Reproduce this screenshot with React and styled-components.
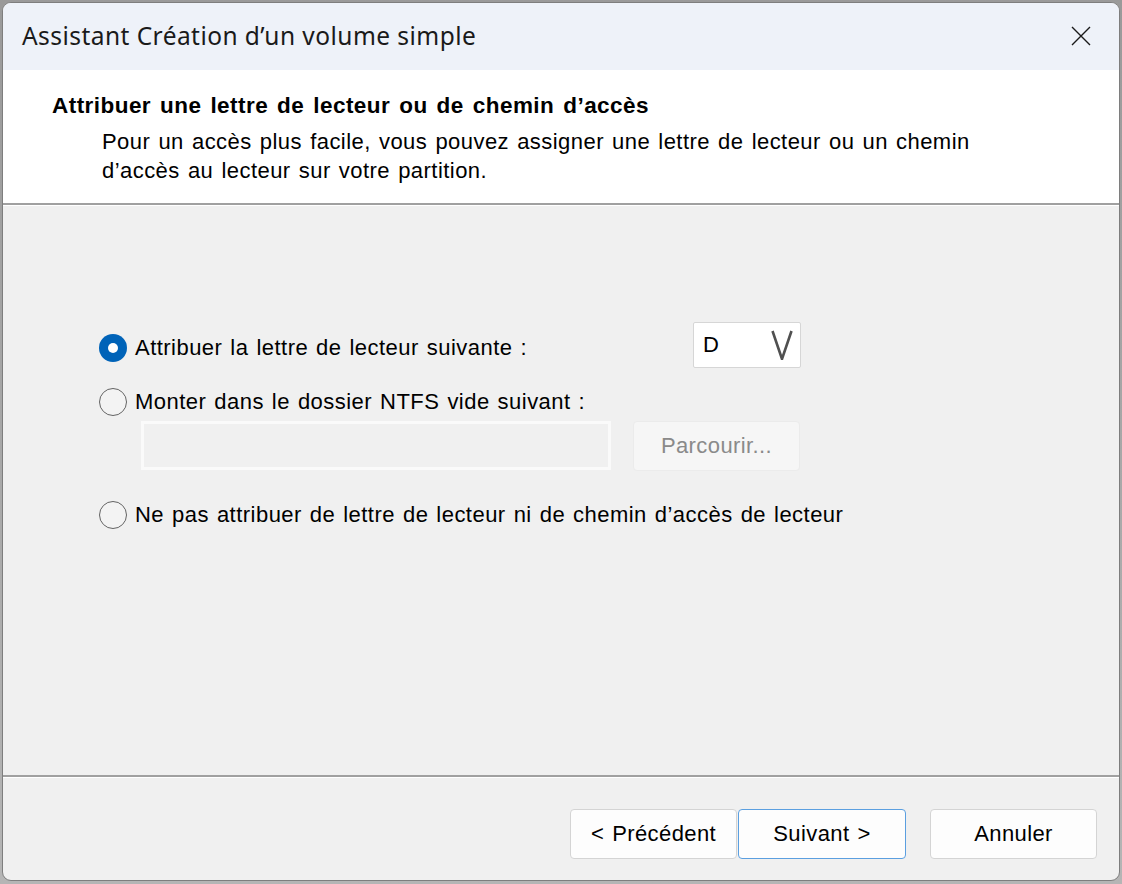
import React from "react";
import styled, { createGlobalStyle } from "styled-components";

const Global = createGlobalStyle`
  html, body { margin: 0; padding: 0; }
  body { background: #8c8c8c; width: 1122px; height: 884px; overflow: hidden; }
  * { box-sizing: border-box; }
`;

const Screen = styled.div`
  width: 1122px;
  height: 884px;
  padding: 2px 2px 3px 2px;
  background: linear-gradient(#9a9a9a, #b5b5b5);
`;

const Window = styled.div`
  width: 1118px;
  height: 879px;
  border: 1px solid #7e7e7e;
  border-radius: 9px;
  overflow: hidden;
  display: flex;
  flex-direction: column;
  background: #f0f0f0;
  font-family: "Liberation Sans", Arial, sans-serif;
  color: #000;
`;

const TitleBar = styled.div`
  height: 67px;
  flex: none;
  background: #eef2f9;
  display: flex;
  align-items: center;
  justify-content: space-between;
  padding: 0 28px 2px 19px;
`;

const Title = styled.div`
  font-family: "Noto Sans", "Open Sans", sans-serif;
  font-size: 24.5px;
  letter-spacing: 0.45px;
  color: #1a1a1a;
`;

const CloseIcon = styled.svg`
  width: 20px;
  height: 20px;
  display: block;
`;

const Header = styled.div`
  flex: none;
  height: 135px;
  background: #fff;
  border-bottom: 2px solid #a0a0a0;
  padding: 23px 0 0 49px;
`;

const Heading = styled.div`
  font-weight: bold;
  font-size: 22.5px;
  letter-spacing: 0.45px;
  word-spacing: 2.3px;
  line-height: 26px;
`;

const Subtitle = styled.div`
  margin: 8px 0 0 50px;
  font-size: 22px;
  letter-spacing: 0.45px;
  word-spacing: 1.6px;
  line-height: 29px;
  width: 960px;
`;

const Body = styled.div`
  flex: 1;
  border-top: 1px solid #fff;
  border-bottom: 2px solid #a0a0a0;
  padding: 116px 0 0 96px;
  display: flex;
  flex-direction: column;
`;

const OptionRow = styled.div`
  display: flex;
  align-items: center;
  height: ${(p) => p.$h || 28}px;
  margin-top: ${(p) => p.$mt || 0}px;
`;

const Label = styled.div`
  display: flex;
  align-items: center;
  gap: 8px;
  font-size: 22px;
  letter-spacing: 0.47px;
  word-spacing: 1.4px;
  width: ${(p) => (p.$w ? p.$w + "px" : "auto")};
  padding-top: ${(p) => p.$shift || 0}px;
  white-space: nowrap;
`;

const Radio = styled.span`
  width: 28px;
  height: 28px;
  border-radius: 50%;
  flex: none;
  position: relative;
  background: ${(p) => (p.$checked ? "#0063b8" : "#f3f3f3")};
  border: ${(p) => (p.$checked ? "none" : "1.5px solid #636363")};
  &::after {
    content: "";
    display: ${(p) => (p.$checked ? "block" : "none")};
    position: absolute;
    left: 9px;
    top: 9px;
    width: 10px;
    height: 10px;
    border-radius: 50%;
    background: #fff;
  }
`;

const Select = styled.div`
  width: 108px;
  height: 46px;
  background: #fff;
  border: 1px solid #d6d6d6;
  border-radius: 2px;
  display: flex;
  align-items: center;
  justify-content: space-between;
  padding: 0 7px 0 9px;
  font-size: 22px;
`;

const Chevron = styled.svg`
  width: 22px;
  height: 30px;
  display: block;
`;

const FieldRow = styled.div`
  display: flex;
  gap: 22px;
  margin: 5px 0 0 42px;
`;

const TextField = styled.div`
  width: 470px;
  height: 49px;
  border: 3px solid #fafafa;
  background: #f0f0f0;
`;

const Button = styled.div`
  width: ${(p) => p.$w || 167}px;
  height: 50px;
  border-radius: 4px;
  border: 1px solid ${(p) => (p.$primary ? "#5b9fe0" : p.$disabled ? "#ebebeb" : "#d4d4d4")};
  background: ${(p) => (p.$disabled ? "#f6f6f6" : "#fdfdfd")};
  color: ${(p) => (p.$disabled ? "#8a8a8a" : "#000")};
  display: flex;
  align-items: center;
  justify-content: center;
  font-size: 22px;
  letter-spacing: 0.4px;
  word-spacing: 1.5px;
  padding-bottom: 1px;
`;

const Footer = styled.div`
  flex: none;
  height: 103px;
  border-top: 1px solid #fff;
  display: flex;
  justify-content: flex-end;
  align-items: flex-start;
  padding: 31px 22px 0 0;
`;

const ButtonGroup = styled.div`
  display: flex;
  gap: 1px;
  margin-right: 24px;
`;

export default function App() {
  return (
    <>
      <Global />
      <Screen>
        <Window>
          <TitleBar>
            <Title>Assistant Création d’un volume simple</Title>
            <CloseIcon viewBox="0 0 20 20">
              <path d="M1 1 L19 19 M19 1 L1 19" stroke="#1a1a1a" strokeWidth="1.4" fill="none" />
            </CloseIcon>
          </TitleBar>
          <Header>
            <Heading>Attribuer une lettre de lecteur ou de chemin d’accès</Heading>
            <Subtitle>
              Pour un accès plus facile, vous pouvez assigner une lettre de lecteur ou un chemin
              <br />
              d’accès au lecteur sur votre partition.
            </Subtitle>
          </Header>
          <Body>
            <OptionRow $h={46}>
              <Label $w={594} $shift={5}>
                <Radio $checked />
                Attribuer la lettre de lecteur suivante :
              </Label>
              <Select>
                D
                <Chevron viewBox="0 0 22 30">
                  <path d="M1.5 1 L11 29 L20.5 1" stroke="#505050" strokeWidth="2.6" fill="none" />
                </Chevron>
              </Select>
            </OptionRow>
            <OptionRow $mt={20}>
              <Label>
                <Radio />
                Monter dans le dossier NTFS vide suivant :
              </Label>
            </OptionRow>
            <FieldRow>
              <TextField />
              <Button $disabled>Parcourir...</Button>
            </FieldRow>
            <OptionRow $mt={30}>
              <Label>
                <Radio />
                Ne pas attribuer de lettre de lecteur ni de chemin d’accès de lecteur
              </Label>
            </OptionRow>
          </Body>
          <Footer>
            <ButtonGroup>
              <Button>&lt; Précédent</Button>
              <Button $primary $w={168}>Suivant &gt;</Button>
            </ButtonGroup>
            <Button>Annuler</Button>
          </Footer>
        </Window>
      </Screen>
    </>
  );
}
